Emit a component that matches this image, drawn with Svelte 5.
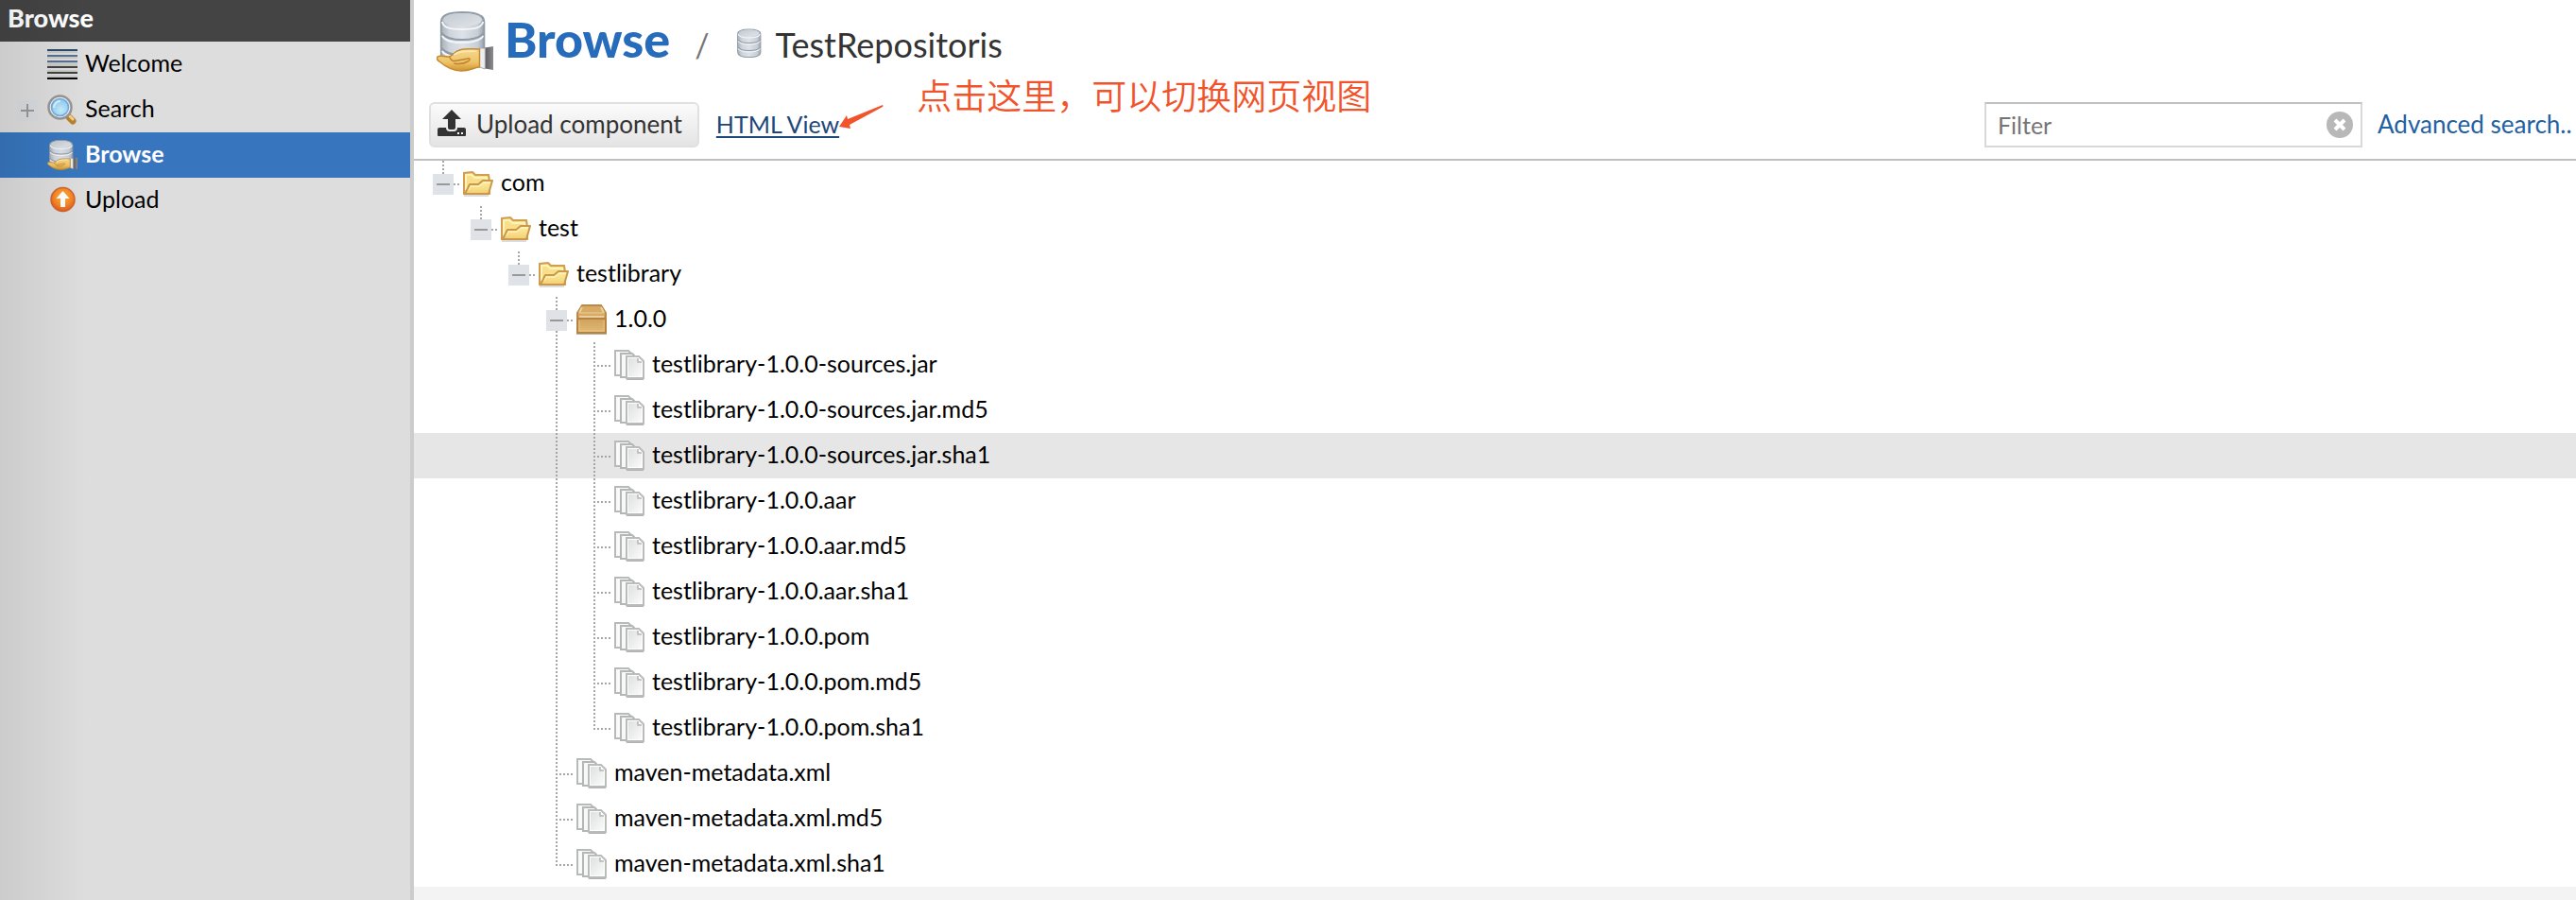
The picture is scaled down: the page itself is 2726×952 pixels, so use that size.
<script>
  const menu = [
    { label: 'Welcome', icon: 'lines' },
    { label: 'Search', icon: 'search', expandable: true },
    { label: 'Browse', icon: 'browse', selected: true },
    { label: 'Upload', icon: 'upload' }
  ];

  const files = [
    'testlibrary-1.0.0-sources.jar',
    'testlibrary-1.0.0-sources.jar.md5',
    'testlibrary-1.0.0-sources.jar.sha1',
    'testlibrary-1.0.0.aar',
    'testlibrary-1.0.0.aar.md5',
    'testlibrary-1.0.0.aar.sha1',
    'testlibrary-1.0.0.pom',
    'testlibrary-1.0.0.pom.md5',
    'testlibrary-1.0.0.pom.sha1'
  ];
  const metadata = ['maven-metadata.xml', 'maven-metadata.xml.md5', 'maven-metadata.xml.sha1'];

  // Each guide names one 40px cell: blank, line, tee, end, open-tee or open-end.
  const rows = [
    { label: 'com', icon: 'folder', guides: ['open-end'] },
    { label: 'test', icon: 'folder', guides: ['blank', 'open-end'] },
    { label: 'testlibrary', icon: 'folder', guides: ['blank', 'blank', 'open-end'] },
    { label: '1.0.0', icon: 'box', guides: ['blank', 'blank', 'blank', 'open-tee'] },
    ...files.map((label, i) => ({
      label,
      icon: 'file',
      guides: ['blank', 'blank', 'blank', 'line', i === files.length - 1 ? 'end' : 'tee']
    })),
    ...metadata.map((label, i) => ({
      label,
      icon: 'file',
      guides: ['blank', 'blank', 'blank', i === metadata.length - 1 ? 'end' : 'tee']
    }))
  ];

  let hovered = $state('testlibrary-1.0.0-sources.jar.sha1');
  let filter = $state('');
</script>

<svelte:head><title>Browse</title></svelte:head>

<svg class="defs" width="0" height="0" aria-hidden="true">
  <defs>
    <linearGradient id="metal" x1="0" x2="1" y1="0" y2="0">
      <stop offset="0" stop-color="#a9b1ba" />
      <stop offset="0.2" stop-color="#cfd5dc" />
      <stop offset="0.5" stop-color="#dde2e9" />
      <stop offset="0.85" stop-color="#c8ced6" />
      <stop offset="1" stop-color="#98a1ab" />
    </linearGradient>
    <linearGradient id="lid" x1="0" x2="1" y1="0" y2="1">
      <stop offset="0" stop-color="#c3cad0" />
      <stop offset="1" stop-color="#dfe4e8" />
    </linearGradient>
    <linearGradient id="skin" x1="0" x2="0" y1="0" y2="1">
      <stop offset="0" stop-color="#f6d88c" />
      <stop offset="0.6" stop-color="#efc468" />
      <stop offset="1" stop-color="#cf942f" />
    </linearGradient>
    <linearGradient id="cuff" x1="0" x2="1" y1="0" y2="0">
      <stop offset="0" stop-color="#4a4a4e" />
      <stop offset="1" stop-color="#8b8b90" />
    </linearGradient>
    <linearGradient id="gold" x1="0" x2="0" y1="0" y2="1">
      <stop offset="0" stop-color="#fff0a6" />
      <stop offset="1" stop-color="#f3cf72" />
    </linearGradient>
    <linearGradient id="carton" x1="0" x2="0" y1="0" y2="1">
      <stop offset="0" stop-color="#cfa25c" />
      <stop offset="1" stop-color="#e2b973" />
    </linearGradient>
    <linearGradient id="paper" x1="0" x2="1" y1="0" y2="1">
      <stop offset="0" stop-color="#dedfdf" />
      <stop offset="1" stop-color="#fbfbfb" />
    </linearGradient>
    <radialGradient id="glass" cx="0.55" cy="0.65" r="0.65">
      <stop offset="0" stop-color="#c5f1ff" />
      <stop offset="1" stop-color="#8fc6f2" />
    </radialGradient>
    <radialGradient id="orange" cx="0.5" cy="0.4" r="0.6">
      <stop offset="0" stop-color="#ffb347" />
      <stop offset="0.6" stop-color="#f58a26" />
      <stop offset="1" stop-color="#df5b24" />
    </radialGradient>
  </defs>
</svg>

{#snippet cylinder()}
  <path d="M3 11C3 4 10 1 26 1s24 3 24 10v38c0 7-8 11-24 11S3 56 3 49z" fill="url(#metal)" stroke="#929ca6" stroke-width="2" />
  <ellipse cx="26.500" cy="9" rx="21" ry="7" fill="url(#lid)" />
  <path d="M4 11c2 7 10 8 22 8s21-1 23-8" fill="none" stroke="#f4f6f8" stroke-width="2" />
  <path d="M4 23c4 6 12 7 22 7s19-1 23-7M4 39c4 6 12 7 22 7s19-1 23-7" fill="none" stroke="#909aa4" stroke-width="2" />
  <path d="M4 26c4 6 12 7 22 7s19-1 23-7M4 42c4 6 12 7 22 7s19-1 23-7" fill="none" stroke="#f2f4f7" stroke-width="2" />
{/snippet}

{#snippet icon(name)}
  {#if name === 'lines'}
    <svg class="icon" viewBox="0 0 32 32" aria-hidden="true">
      <path d="M0 1h32" stroke="#2b4c6c" stroke-width="2" />
      <path d="M0 7h32M0 13h32" stroke="#58718f" stroke-width="2" />
      <path d="M0 19h32M0 25h32" stroke="#41433f" stroke-width="2" />
      <path d="M0 31h32" stroke="#080808" stroke-width="2" />
      <path d="M0 3h32M0 9h32M0 15h32M0 17h32M0 23h32M0 29h32" stroke="#b4b8b8" stroke-width="1" />
    </svg>
  {:else if name === 'search'}
    <svg class="icon" viewBox="0 0 32 32" aria-hidden="true">
      <path d="M20 20l3 3" stroke="#8c8c8c" stroke-width="4" />
      <path d="M23 24l4 4" stroke="#b98232" stroke-width="7" stroke-linecap="round" />
      <path d="M24 23l3 3" stroke="#f4d08a" stroke-width="3" stroke-linecap="round" />
      <circle cx="13.500" cy="13.500" r="12" fill="#f3f4f4" stroke="#969696" stroke-width="2.500" />
      <circle cx="13.500" cy="13.500" r="9" fill="url(#glass)" stroke="#6eaee4" stroke-width="1.500" />
      <path d="M7 14c0-4 3-7 7-7" fill="none" stroke="#dbf3fe" stroke-width="2" />
    </svg>
  {:else if name === 'browse'}
    <svg class="icon" viewBox="0 0 62 64" preserveAspectRatio="none" aria-hidden="true">
      <g transform="translate(2 0)">{@render cylinder()}</g>
      <path d="M50 39l12-2v25l-12-2z" fill="url(#cuff)" />
      <path d="M47 39h6v22l-6-2z" fill="#eceef0" stroke="#a9abae" stroke-width="1" />
      <path d="M1 48c3-2 7 0 12 0 4 0 6-5 12-7 5-2 12-1 22-1v19c-5 0-10 4-20 4C17 63 9 58 3 53c-2-1-3-3-2-5z" fill="url(#skin)" stroke="#c38b31" stroke-width="1.500" />
      <path d="M14 48c2 5 4 5 9 4l11-2c3-1 3 2 0 3-5 3-10 3-15 2" fill="none" stroke="#bd8430" stroke-width="1.500" />
      <path d="M19 46c5-4 12-4 24-4" fill="none" stroke="#fbe7b1" stroke-width="2" />
    </svg>
  {:else if name === 'database'}
    <svg class="icon" viewBox="-4 -1 62 64" preserveAspectRatio="none" aria-hidden="true">{@render cylinder()}</svg>
  {:else if name === 'upload'}
    <svg class="icon" viewBox="0 0 32 32" aria-hidden="true">
      <circle cx="16.500" cy="15" r="14" fill="#d3d7dc" />
      <circle cx="16.500" cy="15" r="12.500" fill="url(#orange)" stroke="#d9622b" stroke-width="1.500" />
      <path d="M16.500 6l7 8h-4.500v9h-5v-9H9.500z" fill="#fff" />
    </svg>
  {:else if name === 'folder'}
    <svg class="icon" viewBox="0 0 32 32" aria-hidden="true">
      <path d="M1 28h26v2H1z" fill="#cfcfcf" opacity="0.700" />
      <path d="M1 27V5l9-1 3 3h14l1 6v14z" fill="#f8df8c" stroke="#cf9e4f" stroke-width="2" />
      <path d="M3 23V7h6l3 3h13v4" fill="none" stroke="#fff3b8" stroke-width="2" />
      <path d="M2 27l5-10h9l5-4h10l-4 14z" fill="url(#gold)" stroke="#cb984b" stroke-width="2" stroke-linejoin="round" />
      <path d="M6 23l2-4h9l5-4h7" fill="none" stroke="#fff6c8" stroke-width="1" />
    </svg>
  {:else if name === 'box'}
    <svg class="icon" viewBox="0 0 32 32" aria-hidden="true">
      <path d="M0 30h32v2H0z" fill="#b9b5ae" />
      <path d="M6 1h20l5 8v6H1V9z" fill="#d7ab66" stroke="#b98a48" stroke-width="2" />
      <path d="M6 3L3 9M26 3l3 6M3 13h26" fill="none" stroke="#ecd09c" stroke-width="2" />
      <path d="M4 9h24" stroke="#e3bd7e" stroke-width="2" />
      <path d="M1 15h30v15H1z" fill="url(#carton)" stroke="#b58442" stroke-width="2" />
      <path d="M3 17v11h26V17" fill="none" stroke="#e8c68a" stroke-width="1" />
    </svg>
  {:else}
    <svg class="icon" viewBox="0 0 32 32" aria-hidden="true">
      <path d="M1 1h14l4 4v22H1z" fill="#fafafa" stroke="#b8baba" stroke-width="2" />
      <path d="M7 4h12l5 5v20H7z" fill="#f8f8f8" stroke="#b4b6b6" stroke-width="2" />
      <path d="M13 31h18" stroke="#b0b2b2" stroke-width="2" />
      <path d="M13 7h13l5 5v18H13z" fill="#fff" stroke="#babcbc" stroke-width="2" />
      <path d="M15 9h9l5 5v14H15z" fill="url(#paper)" />
      <path d="M25 9v4h4" fill="#fff" stroke="#b4b6b6" stroke-width="1.500" />
    </svg>
  {/if}
{/snippet}

{#snippet guide(kind)}
  {#if kind === 'blank'}
    <span class="cell"></span>
  {:else}
    <svg class="cell" viewBox="0 0 40 48" aria-hidden="true">
      <g stroke="#a6a6a6" stroke-width="2" stroke-dasharray="2 2">
        <path d={kind.endsWith('end') ? 'M19 0v26' : 'M19 0v48'} />
        {#if kind !== 'line'}<path d="M22 25h15" />{/if}
      </g>
    </svg>
  {/if}
{/snippet}

{#snippet toggle(label, open)}
  <button class="toggle" type="button" aria-label="{open ? 'Collapse' : 'Expand'} {label}">
    <svg viewBox="0 0 22 22" aria-hidden="true">
      <path d={open ? 'M4 11h14' : 'M4 11h14M11 4v14'} stroke="#999" stroke-width="2" />
    </svg>
  </button>
{/snippet}

<div class="app">
  <aside class="sidebar">
    <h2>Browse</h2>
    <nav aria-label="Main">
      {#each menu as item}
        <div class="row menu-row" class:selected={item.selected}>
          <span class="guide">
            <span class="cell"></span>
            {#if item.expandable}{@render toggle(item.label, false)}{/if}
          </span>
          <a class="node" href="#{item.label}" aria-current={item.selected ? 'page' : undefined}>
            {@render icon(item.icon)}<span class="label">{item.label}</span>
          </a>
        </div>
      {/each}
    </nav>
  </aside>

  <main>
    <header>
      <span class="hero">{@render icon('browse')}</span>
      <div class="trail">
        <h1>Browse</h1>
        <span class="slash">/</span>
        <span class="repo-icon">{@render icon('database')}</span>
        <span class="repo">TestRepositoris</span>
      </div>
    </header>

    <div class="toolbar">
      <button class="upload" type="button">
        <svg viewBox="0 0 32 32" aria-hidden="true">
          <path d="M16 1L26 11h-6v9q0 2-2 2h-4q-2 0-2-2v-9H6z" fill="#333" />
          <path d="M3 20h7q0 4 4 4h4q4 0 4-4h7q2 0 2 2v6q0 1-1 1H2q-1 0-1-1v-6q0-2 2-2z" fill="#333" />
          <path d="M22 25h2v2h-2zM26 25h2v2h-2z" fill="#fff" />
        </svg>
        Upload component
      </button>
      <div class="view">
        <a class="html-view" href="#html">HTML View</a>
        <svg class="arrow" viewBox="0 0 48 28" aria-hidden="true">
          <path d="M0 24L8 12l1 4L46 1q1 1 0 2L11 22l1 4z" fill="#f1532b" />
        </svg>
        <p class="note">点击这里，可以切换网页视图</p>
      </div>
      <div class="search">
        <div class="filter">
          <input type="text" placeholder="Filter" aria-label="Filter" bind:value={filter} />
          <button type="button" class="clear" aria-label="Clear filter" onclick={() => (filter = '')}>
            <svg viewBox="0 0 28 28" aria-hidden="true">
              <circle cx="14" cy="14" r="14" fill="#b8b8b8" />
              <path d="M9 9l10 10M19 9L9 19" stroke="#fff" stroke-width="4" />
            </svg>
          </button>
        </div>
        <a class="advanced" href="#advanced">Advanced search..</a>
      </div>
    </div>

    <ul class="tree">
      {#each rows as row}
        <li class="row" class:hovered={hovered === row.label} onmouseenter={() => (hovered = row.label)}>
          {#each row.guides as kind}
            <span class="guide">
              {@render guide(kind)}
              {#if kind.startsWith('open')}{@render toggle(row.label, true)}{/if}
            </span>
          {/each}
          <a class="node" href="#{row.label}">
            {@render icon(row.icon)}<span class="label">{row.label}</span>
          </a>
        </li>
      {/each}
    </ul>
  </main>
</div>

<style>
  :global(body) {
    margin: 0;
  }
  .defs {
    position: absolute;
  }
  .app {
    display: grid;
    grid-template-columns: 438px minmax(0, 1fr);
    min-height: 100vh;
    background: #f3f3f3;
    color: #000;
    font-family: Lato, Roboto, sans-serif;
    font-size: 25px;
  }
  a {
    color: inherit;
    text-decoration: none;
  }
  button {
    font: inherit;
    cursor: pointer;
  }

  .sidebar {
    position: relative;
    background: #ddd;
    border-right: 4px solid #ccc;
  }
  .sidebar::after {
    content: '';
    position: absolute;
    inset: 0 auto 0 0;
    width: 92px;
    background: linear-gradient(to right, rgba(0, 0, 0, 0.08), rgba(0, 0, 0, 0));
    pointer-events: none;
  }
  h2 {
    margin: 0;
    padding: 0 8px 6px;
    background: #444;
    color: #fff;
    font-size: 27px;
    font-weight: 900;
    line-height: 38px;
  }

  .row {
    display: flex;
    height: 48px;
    padding-left: 12px;
  }
  .menu-row {
    padding-left: 10px;
  }
  .selected {
    background: #3776be;
    color: #fff;
    font-weight: 700;
  }
  .hovered {
    background: #e6e6e6;
  }
  .guide {
    position: relative;
    display: flex;
  }
  .cell {
    display: block;
    width: 40px;
    height: 48px;
  }
  .toggle {
    position: absolute;
    top: 14px;
    left: 8px;
    width: 22px;
    height: 22px;
    padding: 0;
    border: 0;
    background: #dfe2e6;
  }
  .menu-row .toggle {
    background: #d9dcdf;
  }
  .toggle svg,
  .clear svg {
    display: block;
  }
  .node {
    display: flex;
    align-items: center;
    gap: 8px;
    white-space: nowrap;
  }
  .icon {
    display: block;
    width: 32px;
    height: 32px;
  }
  .label {
    padding-bottom: 4px;
  }

  main {
    min-width: 0;
  }
  header {
    display: flex;
    align-items: center;
    gap: 12px;
    height: 88px;
    padding-left: 24px;
    background: #fff;
  }
  .hero .icon {
    width: 60px;
    height: 64px;
  }
  .trail {
    display: flex;
    align-items: baseline;
    padding-bottom: 6px;
  }
  h1 {
    margin: 0;
    color: #266cbb;
    font-size: 52px;
    font-weight: 900;
    line-height: 62px;
  }
  .slash {
    padding: 0 26px;
    color: #777;
    font-size: 34px;
  }
  .repo-icon {
    align-self: center;
    padding-top: 10px;
  }
  .repo {
    padding-left: 12px;
    color: #333;
    font-size: 36px;
  }

  .toolbar {
    display: flex;
    align-items: center;
    padding: 20px 0 12px 16px;
    border-bottom: 2px solid #bfbfbf;
    background: #fff;
  }
  .upload {
    display: flex;
    align-items: center;
    gap: 10px;
    height: 48px;
    padding: 0 16px 2px 6px;
    border: 2px solid #e0e0e0;
    border-radius: 6px;
    background: linear-gradient(#fbfbfb, #e4e4e4);
    color: #333;
    font-size: 26px;
    white-space: nowrap;
  }
  .upload svg {
    width: 32px;
    height: 32px;
  }
  .view {
    position: relative;
    padding: 0 0 2px 18px;
    white-space: nowrap;
  }
  .html-view {
    color: #1d4778;
    text-decoration: underline;
    text-decoration-thickness: 2px;
    text-underline-offset: 3px;
  }
  .arrow {
    position: absolute;
    top: -6px;
    left: 100%;
    width: 48px;
    height: 28px;
  }
  .note {
    position: absolute;
    top: -42px;
    left: 100%;
    margin: 0;
    padding-left: 82px;
    color: #f1532b;
    font-family: 'Noto Sans CJK SC', sans-serif;
    font-size: 37px;
    font-weight: 350;
    line-height: 52px;
  }
  .search {
    display: flex;
    flex: none;
    align-items: center;
    gap: 16px;
    margin-left: auto;
  }
  .filter {
    position: relative;
  }
  input {
    box-sizing: border-box;
    display: block;
    width: 400px;
    height: 48px;
    padding: 0 48px 0 12px;
    border: 2px solid #d9d9d9;
    border-top-color: #c0c0c0;
    background: #fff;
    color: #333;
    font: inherit;
  }
  input::placeholder {
    color: #757575;
    opacity: 1;
  }
  .clear {
    position: absolute;
    top: 10px;
    right: 10px;
    width: 28px;
    height: 28px;
    padding: 0;
    border: 0;
    background: none;
  }
  .advanced {
    width: 210px;
    padding-bottom: 2px;
    color: #245f9f;
    font-size: 26px;
    white-space: nowrap;
  }

  .tree {
    margin: 0;
    padding: 0;
    background: #fff;
    list-style: none;
  }
</style>
